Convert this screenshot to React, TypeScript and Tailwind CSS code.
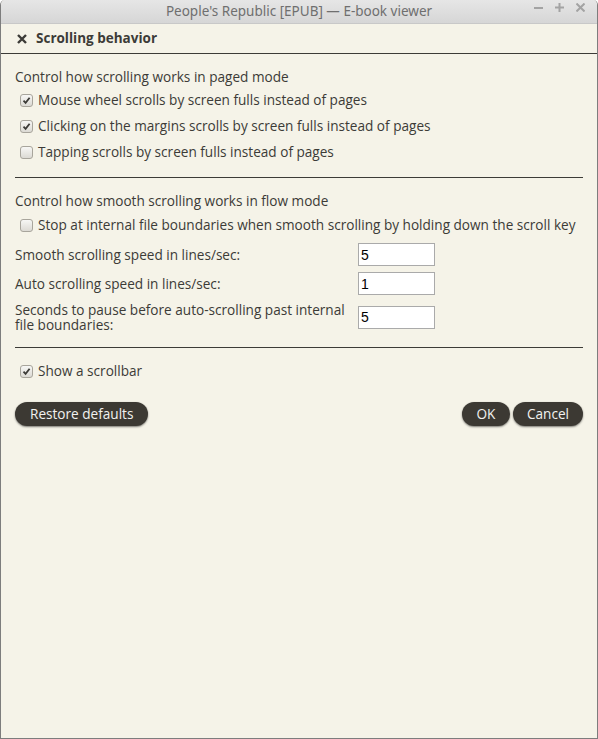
import { useState } from 'react';

const font = { fontFamily: '"Open Sans", "DejaVu Sans", sans-serif' };

function Check({ checked, onChange }: { checked: boolean; onChange: () => void }) {
  return (
    <button
      type="button"
      onClick={onChange}
      className="w-[13px] h-[13px] rounded-[3px] border border-[#a8a59c] bg-gradient-to-b from-[#f7f7f5] to-[#dcdad4] flex items-center justify-center shrink-0"
    >
      {checked && (
        <svg width="9" height="9" viewBox="0 0 9 9">
          <path d="M1.5 4.6 L3.6 6.8 L7.6 1.8" fill="none" stroke="#3c3b37" strokeWidth="1.8" />
        </svg>
      )}
    </button>
  );
}

function CheckRow({ label, initial, className = '' }: { label: string; initial: boolean; className?: string }) {
  const [on, setOn] = useState(initial);
  return (
    <div className={`flex items-center h-[26px] pl-[5px] gap-[5px] ${className}`}>
      <Check checked={on} onChange={() => setOn(!on)} />
      <span>{label}</span>
    </div>
  );
}

function NumField({ label, value, tall, className = '' }: { label: React.ReactNode; value: string; tall?: boolean; className?: string }) {
  return (
    <div className={`flex items-center ${tall ? 'h-[38px]' : 'h-[29px]'} ${className}`}>
      <div className="w-[343px] leading-[15px]">{label}</div>
      <input
        defaultValue={value}
        className="w-[77px] h-[23px] border border-[#aaaaaa] bg-white px-[2px] text-[14px] text-black outline-none"
        style={{ fontFamily: '"Liberation Sans", sans-serif' }}
      />
    </div>
  );
}

export default function App() {
  return (
    <div className="w-[598px] h-[739px] bg-[#f5f3e8] text-[#3c3b37] text-[13.6px] flex flex-col border-x border-b border-[#7d7d7d] rounded-t-[5px] overflow-hidden" style={font}>
      <div className="h-[24px] shrink-0 bg-gradient-to-b from-[#e6e6e6] to-[#d6d6d6] relative flex items-center justify-center border-b border-[#c8c8c8]">
        <span className="text-[#6f6f6f] text-[13.5px]" style={{ fontFamily: '"Noto Sans", sans-serif' }}>
          People's Republic [EPUB] — E-book viewer
        </span>
        <div className="absolute right-[12px] top-[3px] flex items-center gap-[12px]">
          <svg width="9" height="9" viewBox="0 0 9 9"><path d="M0 5 H9" stroke="#a3a3a3" strokeWidth="2" /></svg>
          <svg width="9" height="9" viewBox="0 0 9 9"><path d="M0 4.5 H9 M4.5 0 V9" stroke="#a3a3a3" strokeWidth="2" /></svg>
          <svg width="9" height="9" viewBox="0 0 9 9"><path d="M0.5 0.5 L8.5 8.5 M8.5 0.5 L0.5 8.5" stroke="#a3a3a3" strokeWidth="2" /></svg>
        </div>
      </div>

      <div className="h-[30px] shrink-0 flex items-center pl-[16px] gap-[9px] border-b border-[#3c3b37]">
        <svg width="10" height="10" viewBox="0 0 10 10">
          <path d="M1 1 L9 9 M9 1 L1 9" stroke="#3c3b37" strokeWidth="2.4" />
        </svg>
        <span className="font-bold text-[13.5px]">Scrolling behavior</span>
      </div>

      <div className="px-[14px] pt-[13px] flex flex-col">
        <div className="h-[20px] flex items-center">Control how scrolling works in paged mode</div>
        <CheckRow label="Mouse wheel scrolls by screen fulls instead of pages" initial />
        <CheckRow label="Clicking on the margins scrolls by screen fulls instead of pages" initial />
        <CheckRow label="Tapping scrolls by screen fulls instead of pages" initial={false} />

        <div className="h-px bg-[#3c3b37] mt-[12px] mb-[13px]" />

        <div className="h-[20px] flex items-center">Control how smooth scrolling works in flow mode</div>
        <CheckRow label="Stop at internal file boundaries when smooth scrolling by holding down the scroll key" initial={false} className="mt-[1px]" />
        <NumField label="Smooth scrolling speed in lines/sec:" value="5" className="mt-[2px]" />
        <NumField label="Auto scrolling speed in lines/sec:" value="1" />
        <NumField
          label={<>Seconds to pause before auto-scrolling past internal<br />file boundaries:</>}
          value="5"
          tall
        />

        <div className="h-px bg-[#3c3b37] mt-[11px] mb-[10px]" />

        <CheckRow label="Show a scrollbar" initial />

        <div className="flex items-center mt-[18px]">
          <button className="h-[24px] px-[15px] rounded-full bg-[#3c3933] text-[#f2f1ef] shadow-[0_1px_2px_rgba(0,0,0,0.5)]">
            Restore defaults
          </button>
          <div className="ml-auto flex gap-[3px]">
            <button className="h-[24px] w-[48px] rounded-full bg-[#3c3933] text-[#f2f1ef] shadow-[0_1px_2px_rgba(0,0,0,0.5)]">
              OK
            </button>
            <button className="h-[24px] w-[70px] rounded-full bg-[#3c3933] text-[#f2f1ef] shadow-[0_1px_2px_rgba(0,0,0,0.5)]">
              Cancel
            </button>
          </div>
        </div>
      </div>
    </div>
  );
}
